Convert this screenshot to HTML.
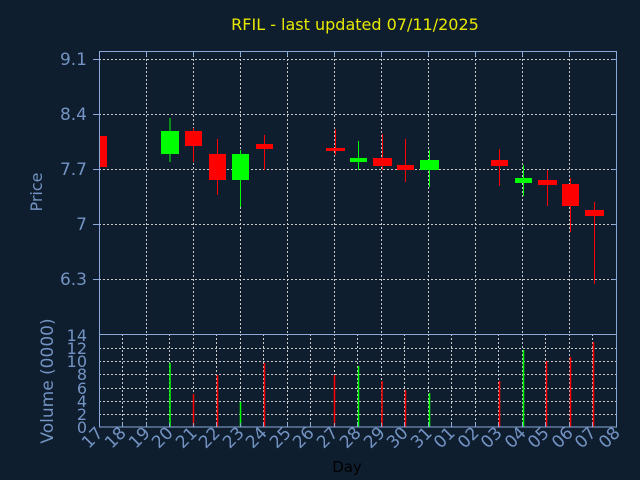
<!DOCTYPE html>
<html><head><meta charset="utf-8"><style>
html,body{margin:0;padding:0;background:#0f1e2f;width:640px;height:480px;overflow:hidden}
svg{display:block}
text{font-family:"DejaVu Sans","Liberation Sans",sans-serif}
</style></head><body>
<svg width="640" height="480" viewBox="0 0 640 480" xmlns="http://www.w3.org/2000/svg">
<rect width="640" height="480" fill="#0f1e2f"/>
<text x="355" y="30" fill="#e8e800" font-size="16" text-anchor="middle">RFIL - last updated 07/11/2025</text>
<g stroke="#c8c8c8" stroke-width="1" stroke-dasharray="2,2" fill="none">
<path d="M99 59.5H617M99 114.5H617M99 169.5H617M99 224.5H617M99 279.5H617"/>
<path d="M146.5 51V334M193.5 51V334M240.5 51V334M287.5 51V334M334.5 51V334M381.5 51V334M428.5 51V334M475.5 51V334M522.5 51V334M569.5 51V334"/>
<path d="M99 348.5H617M99 361.5H617M99 374.5H617M99 388.5H617M99 401.5H617M99 414.5H617"/>
<path d="M122.5 334V427M146.5 334V427M169.5 334V427M193.5 334V427M216.5 334V427M240.5 334V427M263.5 334V427M287.5 334V427M310.5 334V427M334.5 334V427M357.5 334V427M381.5 334V427M404.5 334V427M428.5 334V427M451.5 334V427M475.5 334V427M498.5 334V427M522.5 334V427M545.5 334V427M569.5 334V427M592.5 334V427"/>
</g>
<g>
<rect x="99" y="136" width="8" height="31" fill="#f00"/>
<line x1="170" y1="118" x2="170" y2="162" stroke="#0f0"/><rect x="161" y="131" width="18" height="23" fill="#0f0"/>
<line x1="193.5" y1="128" x2="193.5" y2="162" stroke="#f00"/><rect x="185" y="131" width="17" height="15" fill="#f00"/>
<line x1="217.5" y1="139" x2="217.5" y2="195" stroke="#f00"/><rect x="209" y="154" width="17" height="26" fill="#f00"/>
<line x1="240.5" y1="150" x2="240.5" y2="207" stroke="#0f0"/><rect x="232" y="154" width="17" height="26" fill="#0f0"/>
<line x1="264.5" y1="135" x2="264.5" y2="170" stroke="#f00"/><rect x="256" y="144" width="17" height="5" fill="#f00"/>
<line x1="335.5" y1="129" x2="335.5" y2="155" stroke="#f00"/><rect x="326" y="148" width="19" height="3" fill="#f00"/>
<line x1="358.5" y1="141" x2="358.5" y2="170" stroke="#0f0"/><rect x="350" y="158" width="17" height="4" fill="#0f0"/>
<line x1="382.5" y1="134" x2="382.5" y2="170" stroke="#f00"/><rect x="373" y="158" width="19" height="8" fill="#f00"/>
<line x1="405.5" y1="139" x2="405.5" y2="182" stroke="#f00"/><rect x="397" y="165" width="17" height="5" fill="#f00"/>
<line x1="429.5" y1="150" x2="429.5" y2="187" stroke="#0f0"/><rect x="420" y="160" width="19" height="10" fill="#0f0"/>
<line x1="499.5" y1="149" x2="499.5" y2="186" stroke="#f00"/><rect x="491" y="160" width="17" height="6" fill="#f00"/>
<line x1="523.5" y1="165" x2="523.5" y2="196" stroke="#0f0"/><rect x="515" y="178" width="17" height="5" fill="#0f0"/>
<line x1="547.5" y1="170" x2="547.5" y2="206" stroke="#f00"/><rect x="538" y="180" width="19" height="5" fill="#f00"/>
<line x1="570.5" y1="178" x2="570.5" y2="232" stroke="#f00"/><rect x="562" y="184" width="17" height="22" fill="#f00"/>
<line x1="594.5" y1="202" x2="594.5" y2="284" stroke="#f00"/><rect x="585" y="210" width="19" height="6" fill="#f00"/>
</g>
<g stroke-width="1.5">
<line x1="170" y1="363" x2="170" y2="427" stroke="#0f0"/>
<line x1="193.5" y1="394" x2="193.5" y2="427" stroke="#f00"/>
<line x1="217.5" y1="375" x2="217.5" y2="427" stroke="#f00"/>
<line x1="240.5" y1="402" x2="240.5" y2="427" stroke="#0f0"/>
<line x1="264.5" y1="363" x2="264.5" y2="427" stroke="#f00"/>
<line x1="334.5" y1="375" x2="334.5" y2="427" stroke="#f00"/>
<line x1="358.5" y1="366" x2="358.5" y2="427" stroke="#0f0"/>
<line x1="382" y1="381" x2="382" y2="427" stroke="#f00"/>
<line x1="405.5" y1="390" x2="405.5" y2="427" stroke="#f00"/>
<line x1="429.5" y1="393" x2="429.5" y2="427" stroke="#0f0"/>
<line x1="499.5" y1="381" x2="499.5" y2="427" stroke="#f00"/>
<line x1="523.5" y1="350" x2="523.5" y2="427" stroke="#0f0"/>
<line x1="546.5" y1="361" x2="546.5" y2="427" stroke="#f00"/>
<line x1="570.5" y1="357" x2="570.5" y2="427" stroke="#f00"/>
<line x1="593.5" y1="342" x2="593.5" y2="427" stroke="#f00"/>
</g>
<g stroke="#8aa8d8" stroke-width="1" fill="none">
<rect x="99.5" y="51.5" width="517" height="375.5"/>
<line x1="99" y1="334.5" x2="617" y2="334.5"/>
<path d="M93 59.5H99M93 114.5H99M93 169.5H99M93 224.5H99M93 279.5H99M612 59.5H617M612 114.5H617M612 169.5H617M612 224.5H617M612 279.5H617"/>
<path d="M146.5 51V56M193.5 51V56M240.5 51V56M287.5 51V56M334.5 51V56M381.5 51V56M428.5 51V56M475.5 51V56M522.5 51V56M569.5 51V56"/>
<path d="M122.5 427V423M146.5 427V423M169.5 427V423M193.5 427V423M216.5 427V423M240.5 427V423M263.5 427V423M287.5 427V423M310.5 427V423M334.5 427V423M357.5 427V423M381.5 427V423M404.5 427V423M428.5 427V423M451.5 427V423M475.5 427V423M498.5 427V423M522.5 427V423M545.5 427V423M569.5 427V423M592.5 427V423"/>
</g>
<g fill="#7393c3" font-size="17" text-anchor="end">
<text x="87" y="65">9.1</text><text x="87" y="120">8.4</text><text x="87" y="175">7.7</text><text x="87" y="230">7</text><text x="87" y="285">6.3</text>
</g>
<g fill="#7393c3" font-size="16" text-anchor="end">
<text x="87" y="341">14</text><text x="87" y="354">12</text><text x="87" y="367">10</text><text x="87" y="380">8</text><text x="87" y="394">6</text><text x="87" y="407">4</text><text x="87" y="420">2</text><text x="87" y="433">0</text>
</g>
<text transform="translate(42,192) rotate(-90)" fill="#7393c3" font-size="16" text-anchor="middle">Price</text>
<text transform="translate(53,381) rotate(-90)" fill="#7393c3" font-size="17" text-anchor="middle">Volume (0000)</text>
<text x="347" y="472" fill="#000" font-size="15" text-anchor="middle">Day</text>
<g fill="#7393c3" font-size="17" text-anchor="end">
<text transform="translate(104,434) rotate(-45)">17</text>
<text transform="translate(127,434) rotate(-45)">18</text>
<text transform="translate(151,434) rotate(-45)">19</text>
<text transform="translate(174,434) rotate(-45)">20</text>
<text transform="translate(198,434) rotate(-45)">21</text>
<text transform="translate(221,434) rotate(-45)">22</text>
<text transform="translate(245,434) rotate(-45)">23</text>
<text transform="translate(268,434) rotate(-45)">24</text>
<text transform="translate(292,434) rotate(-45)">25</text>
<text transform="translate(315,434) rotate(-45)">26</text>
<text transform="translate(339,434) rotate(-45)">27</text>
<text transform="translate(362,434) rotate(-45)">28</text>
<text transform="translate(386,434) rotate(-45)">29</text>
<text transform="translate(409,434) rotate(-45)">30</text>
<text transform="translate(433,434) rotate(-45)">31</text>
<text transform="translate(456,434) rotate(-45)">01</text>
<text transform="translate(480,434) rotate(-45)">02</text>
<text transform="translate(503,434) rotate(-45)">03</text>
<text transform="translate(527,434) rotate(-45)">04</text>
<text transform="translate(550,434) rotate(-45)">05</text>
<text transform="translate(574,434) rotate(-45)">06</text>
<text transform="translate(597,434) rotate(-45)">07</text>
<text transform="translate(621,434) rotate(-45)">08</text>
</g>
</svg>
</body></html>
